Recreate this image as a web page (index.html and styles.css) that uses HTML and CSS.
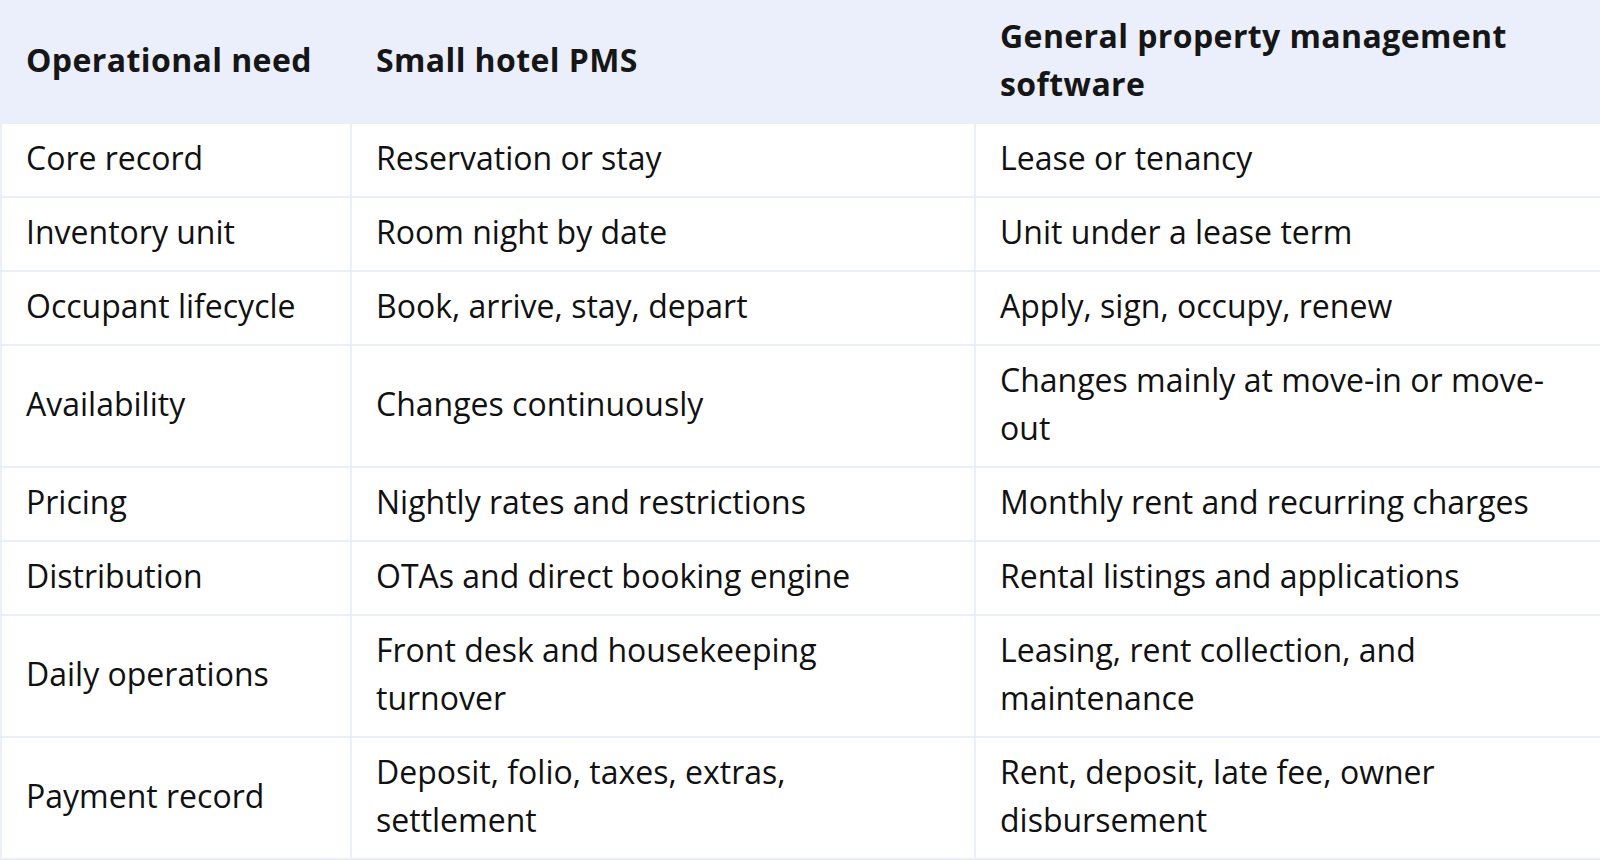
FILE: index.html
```html
<!DOCTYPE html>
<html lang="en">
<head>
<meta charset="utf-8">
<title>Small hotel PMS vs general property management software</title>
<link rel="stylesheet" href="styles.css">
</head>
<body>
<table class="compare">
  <colgroup>
    <col class="col-need">
    <col class="col-hotel">
    <col class="col-general">
  </colgroup>
  <thead>
    <tr>
      <th>Operational need</th>
      <th>Small hotel PMS</th>
      <th>General property management software</th>
    </tr>
  </thead>
  <tbody>
    <tr><td>Core record</td><td>Reservation or stay</td><td>Lease or tenancy</td></tr>
    <tr><td>Inventory unit</td><td>Room night by date</td><td>Unit under a lease term</td></tr>
    <tr><td>Occupant lifecycle</td><td>Book, arrive, stay, depart</td><td>Apply, sign, occupy, renew</td></tr>
    <tr><td>Availability</td><td>Changes continuously</td><td>Changes mainly at move-in or move-out</td></tr>
    <tr><td>Pricing</td><td>Nightly rates and restrictions</td><td>Monthly rent and recurring charges</td></tr>
    <tr><td>Distribution</td><td>OTAs and direct booking engine</td><td>Rental listings and applications</td></tr>
    <tr><td>Daily operations</td><td>Front desk and housekeeping turnover</td><td>Leasing, rent collection, and maintenance</td></tr>
    <tr><td>Payment record</td><td>Deposit, folio, taxes, extras, settlement</td><td>Rent, deposit, late fee, owner disbursement</td></tr>
  </tbody>
</table>
</body>
</html>
```

FILE: styles.css
```css
html, body {
  margin: 0;
  padding: 0;
  background: #ffffff;
}

.compare {
  width: 1600px;
  table-layout: fixed;
  border-collapse: collapse;
  font-family: "Open Sans", "Noto Sans", sans-serif;
  font-size: 32px;
  line-height: 48px;
  color: #111111;
}

.col-need { width: 350px; }
.col-hotel { width: 624px; }
.col-general { width: 626px; }

.compare th,
.compare td {
  border: 2px solid #ebeffb;
  padding: 10px 24px 14px;
  text-align: left;
  vertical-align: middle;
}

.compare th {
  background: #ebeffb;
  font-weight: 700;
  letter-spacing: 0.4px;
  color: #161616;
}
```
